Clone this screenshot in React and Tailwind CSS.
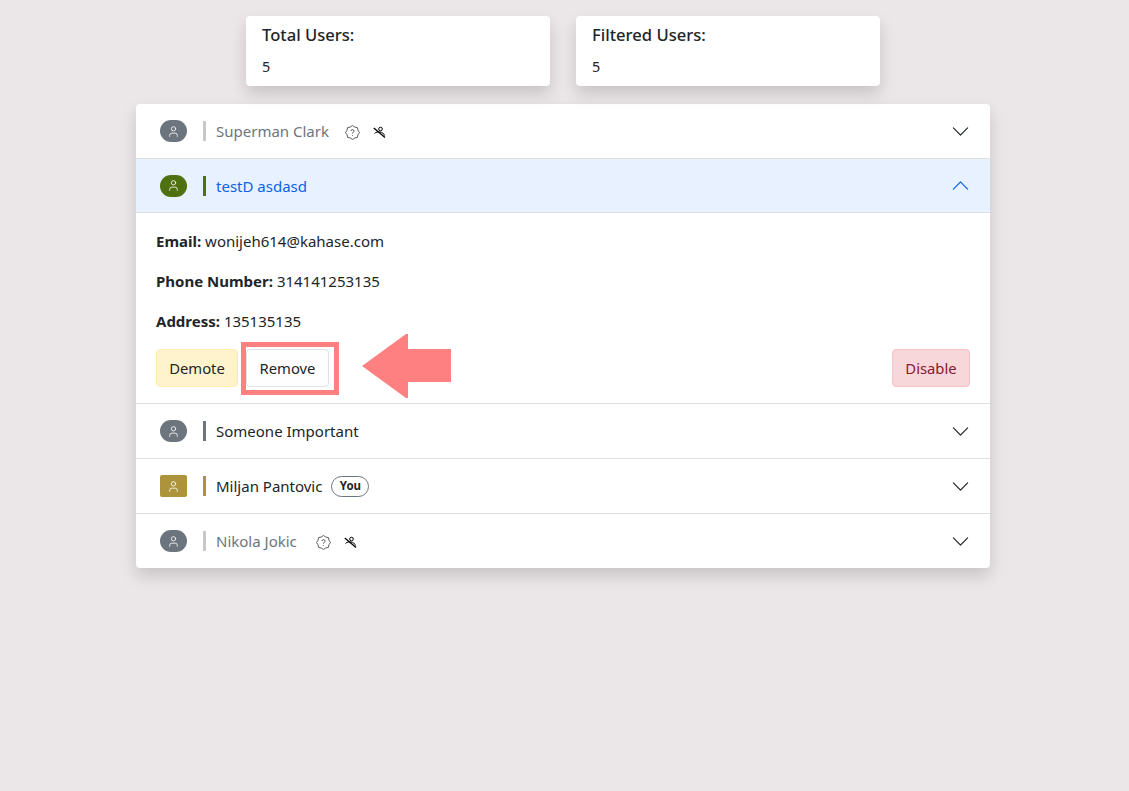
import { BsChevronDown, BsChevronUp } from 'react-icons/bs';
import { User } from 'lucide-react';

const users = [
  { name: 'Superman Clark', avatar: 'bg-[#6c757d] rounded-full', bar: 'bg-[#c8c8c8]', text: 'text-[#6c757d]', disabled: true, iconGap: 'ml-4' },
  { name: 'testD asdasd', avatar: 'bg-[#4f700f] rounded-full', bar: 'bg-[#4f700f]', text: 'text-[#0c63e4]', open: true },
  { name: 'Someone Important', avatar: 'bg-[#6c757d] rounded-full', bar: 'bg-[#6c757d]', text: 'text-[#212529]' },
  { name: 'Miljan Pantovic', avatar: 'bg-[#ad943c] rounded-[2px]', bar: 'bg-[#ad943c]', text: 'text-[#212529]', you: true },
  { name: 'Nikola Jokic', avatar: 'bg-[#6c757d] rounded-full', bar: 'bg-[#c8c8c8]', text: 'text-[#6c757d]', disabled: true, iconGap: 'ml-[19px]' },
];

// patch with a question mark, outline is an 8 point badge
function PatchIcon({ className }) {
  return (
    <svg className={className} width="15" height="15" viewBox="0 0 15 15" fill="none" stroke="#5a5a5a" strokeWidth="1">
      <path d="M7.5 .5 L9.7 2 L12.4 2.6 L13 5.3 L14.5 7.5 L13 9.7 L12.4 12.4 L9.7 13 L7.5 14.5 L5.3 13 L2.6 12.4 L2 9.7 L.5 7.5 L2 5.3 L2.6 2.6 L5.3 2 Z" />
      <path d="M5.9 6 C5.9 4.2 9.1 4.2 9.1 6 C9.1 7.2 7.5 7.2 7.5 8.6" />
      <circle cx="7.5" cy="10.4" r=".5" fill="#5a5a5a" stroke="none" />
    </svg>
  );
}

// struck through person
function SlashIcon({ className }) {
  return (
    <svg className={className} width="13" height="13" viewBox="0 0 13 13" fill="none" stroke="#000">
      <circle cx="7.5" cy="3" r="1.8" strokeWidth="1" />
      <path d="M1.5 7.5 C3 6 5 5.8 7 6 C9 6.2 11 7.5 11.5 9.5" strokeWidth="1" />
      <path d="M.8 2 L12 11.5" strokeWidth="1.3" />
    </svg>
  );
}

function StatCard({ title }) {
  return (
    <div className="w-[304px] h-[70px] bg-white rounded-[4px] px-4 pt-[7px] shadow-[0_8px_16px_rgba(0,0,0,0.15)]">
      <div className="text-[16.6px] leading-[24px] font-medium text-[#212529]">{title}</div>
      <div className="mt-[9px] text-[14.4px] leading-[21px] text-[#212529]">5</div>
    </div>
  );
}

function UserHeader({ user }) {
  return (
    <div className={`h-[54px] flex items-center pl-6 pr-[20px] ${user.open ? 'bg-[#e7f1ff] border-b border-[#dcdfe3]' : ''}`}>
      <div className={`w-[27px] h-[22px] flex items-center justify-center text-white ${user.avatar}`}>
        <User size={13} strokeWidth={1.5} />
      </div>
      <div className={`ml-4 w-[3px] h-5 ${user.bar}`} />
      <span className={`ml-[10px] pt-[1px] text-[15px] ${user.text}`}>{user.name}</span>
      {user.you && (
        <span className="ml-[9px] h-[21px] w-[38px] flex items-center justify-center rounded-full border border-[#6c757d] text-[11.5px] font-bold text-[#212529]">You</span>
      )}
      {user.disabled && (
        <>
          <PatchIcon className={`${user.iconGap} mt-[2px]`} />
          <SlashIcon className="ml-[13px] mt-[2px]" />
        </>
      )}
      <div className="ml-auto">
        {user.open ? <BsChevronUp size={19} className="text-[#0c63e4]" /> : <BsChevronDown size={19} className="text-[#212529]" />}
      </div>
    </div>
  );
}

function UserDetails() {
  return (
    <div className="relative h-[190px] px-5 pt-[17px] text-[15px] text-[#212529]">
      <p className="leading-[22px]"><b className="font-bold">Email:</b> wonijeh614@kahase.com</p>
      <p className="mt-[18px] leading-[22px]"><b className="font-bold">Phone Number:</b> 314141253135</p>
      <p className="mt-[18px] leading-[22px]"><b className="font-bold">Address:</b> 135135135</p>
      <div className="mt-[17px] flex gap-2">
        <button className="h-[38px] w-[82px] rounded-[4px] border border-[#ffecb5] bg-[#fff3cd] text-[14.8px] text-[#212529]">Demote</button>
        <button className="h-[38px] w-[83px] rounded-[4px] border border-[#dee2e6] bg-[#fefefe] text-[14.8px] text-[#212529]">Remove</button>
        <button className="ml-auto h-[38px] w-[78px] rounded-[4px] border border-[#f5c2c7] bg-[#f8d7da] text-[14.8px] text-[#842029]">Disable</button>
      </div>
      {/* annotation over the remove button */}
      <div className="absolute left-[105px] top-[129px] w-[98px] h-[53px] border-[5px] border-[#ff8080]" />
      <svg className="absolute left-[226px] top-[121px]" width="90" height="65" viewBox="0 0 90 65">
        <path d="M0 32 L44 0 L46 0 L46 15 L88 15 Q89 15 89 16 L89 48 L46 48 L46 64 L44 64 Z" fill="#ff8080" />
      </svg>
    </div>
  );
}

export default function App() {
  return (
    <div className="min-h-screen bg-[#ebe6e7] pt-4 font-['Noto_Sans',sans-serif]">
      <div className="flex justify-center gap-[26px] pr-[3px]">
        <StatCard title="Total Users:" />
        <StatCard title="Filtered Users:" />
      </div>
      <div className="mt-[18px] ml-[136px] w-[854px] bg-white rounded-[4px] shadow-[0_8px_16px_rgba(0,0,0,0.15)]">
        {users.map((user, i) => (
          <div key={user.name} className={i > 0 ? 'border-t border-[#dfdfdf]' : ''}>
            <UserHeader user={user} />
            {user.open && <UserDetails />}
          </div>
        ))}
      </div>
    </div>
  );
}
